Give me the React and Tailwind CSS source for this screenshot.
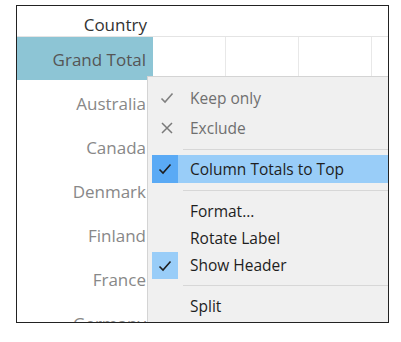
import React from "react";

const Check = ({ className }) => (
  <svg width="14" height="12" viewBox="0 0 14 12" className={className}>
    <path d="M1.5 6.5 L5 10 L12.5 1.5" fill="none" stroke="currentColor" strokeWidth="1.6" />
  </svg>
);

const Cross = () => (
  <svg width="12" height="12" viewBox="0 0 12 12" className="text-[#7a7a7a]">
    <path d="M1 1 L11 11 M11 1 L1 11" fill="none" stroke="currentColor" strokeWidth="1.5" />
  </svg>
);

export default function App() {
  const countries = ["Australia", "Canada", "Denmark", "Finland", "France", "Germany"];
  return (
    <div className="w-[401px] h-[342px] bg-white pt-[5px] pl-[16px]" style={{ fontFamily: '"Open Sans", "Noto Sans", sans-serif' }}>
      <div className="relative w-[373px] h-[318px] border border-[#222] overflow-hidden">
        <div className="flex flex-col">
          <div className="h-[30px] flex items-center">
            <div className="w-[136px] text-right pr-[6px] text-[17px] text-[#333] leading-none pt-[7px]">Country</div>
          </div>
          <div className="flex h-[44px] border-t border-[#e4e4e4]">
            <div className="w-[136px] bg-[#8dc5d5] flex items-center justify-end pr-[7px] pt-[3px] text-[17px] text-[#555]">Grand Total</div>
            <div className="w-[73px] border-r border-[#e8e8e8]"></div>
            <div className="w-[73px] border-r border-[#e8e8e8]"></div>
            <div className="w-[73px] border-r border-[#e8e8e8]"></div>
            <div className="flex-1"></div>
          </div>
          {countries.map((c) => (
            <div key={c} className="flex h-[44px]">
              <div className="w-[136px] flex items-center justify-end pr-[7px] pt-[3px] text-[17px] text-[#888]">{c}</div>
            </div>
          ))}
        </div>

        <div className="absolute left-[130px] top-[70px] w-[260px] h-[260px] bg-[#f0f0f0] border-l border-t border-[#d4d4d4] pt-[6px] text-[15.5px]">
          <div className="h-[30px] flex items-center text-[#6f6f6f]">
            <div className="w-[30px] ml-[4px] flex justify-center text-[#808080]"><Check /></div>
            <span className="ml-[8px] pt-[1px]">Keep only</span>
          </div>
          <div className="h-[30px] flex items-center text-[#6f6f6f]">
            <div className="w-[30px] ml-[4px] flex justify-center"><Cross /></div>
            <span className="ml-[8px] pt-[1px]">Exclude</span>
          </div>
          <div className="h-[12px] flex items-center pl-[35px]"><div className="h-px flex-1 bg-[#d7d7d7]"></div></div>
          <div className="h-[28px] flex items-center ml-[4px] bg-[#99cdf8] text-[#1e1e1e]">
            <div className="w-[26px] h-full bg-[#5aaaf5] flex items-center justify-center text-[#1e1e1e]"><Check /></div>
            <span className="ml-[12px] pt-[2px]">Column Totals to Top</span>
          </div>
          <div className="h-[14px] flex items-center pl-[35px]"><div className="h-px flex-1 bg-[#d7d7d7]"></div></div>
          <div className="h-[28px] flex items-center text-[#1e1e1e]">
            <span className="ml-[42px] pt-[1px]">Format...</span>
          </div>
          <div className="h-[27px] flex items-center text-[#1e1e1e]">
            <span className="ml-[42px] pt-[1px]">Rotate Label</span>
          </div>
          <div className="h-[27px] flex items-center text-[#1e1e1e]">
            <div className="w-[26px] h-full ml-[4px] bg-[#99cdf8] flex items-center justify-center"><Check /></div>
            <span className="ml-[12px] pt-[1px]">Show Header</span>
          </div>
          <div className="h-[13px] flex items-center pl-[35px]"><div className="h-px flex-1 bg-[#d7d7d7]"></div></div>
          <div className="h-[28px] flex items-center text-[#1e1e1e]">
            <span className="ml-[42px] pt-[1px]">Split</span>
          </div>
        </div>
      </div>
    </div>
  );
}
